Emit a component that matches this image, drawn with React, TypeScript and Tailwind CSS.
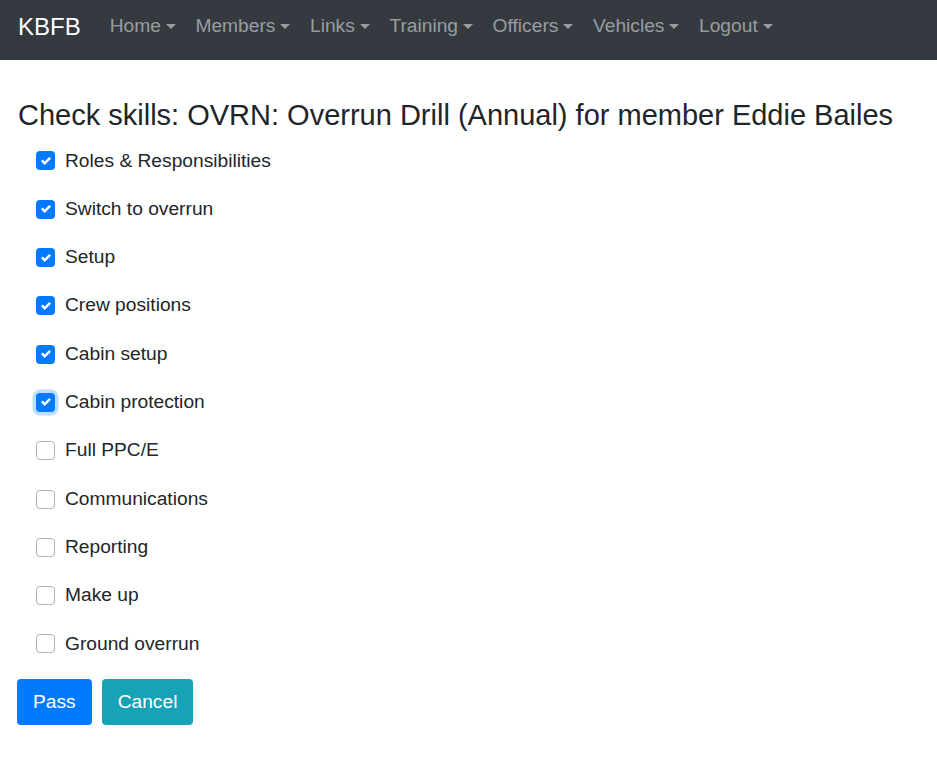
const NAV = ["Home", "Members", "Links", "Training", "Officers", "Vehicles", "Logout"]

const SKILLS = [
  { label: "Roles & Responsibilities", checked: true },
  { label: "Switch to overrun", checked: true },
  { label: "Setup", checked: true },
  { label: "Crew positions", checked: true },
  { label: "Cabin setup", checked: true },
  { label: "Cabin protection", checked: true, focus: true },
  { label: "Full PPC/E", checked: false },
  { label: "Communications", checked: false },
  { label: "Reporting", checked: false },
  { label: "Make up", checked: false },
  { label: "Ground overrun", checked: false },
]

function Caret() {
  return (
    <span className="ml-[5px] inline-block h-0 w-0 border-x-[5px] border-t-[5px] border-x-transparent border-t-current align-middle" />
  )
}

function Box({ checked, focus }: { checked: boolean; focus?: boolean }) {
  if (!checked) {
    return (
      <span className="block h-[19px] w-[19px] rounded-[4px] border border-[#adb5bd] bg-white" />
    )
  }
  return (
    <span
      className={
        "flex h-[19px] w-[19px] items-center justify-center rounded-[4px] bg-[#007bff]" +
        (focus ? " shadow-[0_0_0_3.5px_rgba(0,123,255,0.25)]" : "")
      }
    >
      <svg viewBox="0 0 8 8" className="h-[10px] w-[10px]">
        <path
          fill="#fff"
          d="M6.564.75l-3.59 3.612-1.538-1.55L0 4.26l2.974 2.99L8 2.193z"
        />
      </svg>
    </span>
  )
}

export default function App() {
  return (
    <div className="min-h-[768px] bg-white font-['Liberation_Sans',Arial,sans-serif] text-[#212529]">
      <nav className="flex h-[60px] items-center bg-[#343a40] px-[18px] pb-[7px]">
        <span className="mr-[19.2px] text-[24px] leading-[1.5] text-white">KBFB</span>
        {NAV.map((n) => (
          <span
            key={n}
            className="flex items-center px-[9.8px] text-[19.2px] leading-[1.5] text-[rgba(255,255,255,0.5)]"
          >
            {n}
            <Caret />
          </span>
        ))}
      </nav>

      <div className="px-[18px]">
        <h4 className="mt-[38px] text-[29px] font-medium leading-[1.2]">
          Check skills: OVRN: Overrun Drill (Annual) for member Eddie Bailes
        </h4>
        <div className="mt-[4px] flex flex-col">
          {SKILLS.map((s) => (
            <label key={s.label} className="flex h-[48.3px] items-center pl-[18px]">
              <Box checked={s.checked} focus={s.focus} />
              <span className="ml-[10px] text-[19.2px] leading-[1.5]">{s.label}</span>
            </label>
          ))}
        </div>
        <div className="mt-[11px] flex gap-[10px]">
          <button className="-ml-px h-[46px] rounded-[4px] bg-[#007bff] px-[16px] text-[19.2px] text-white">
            Pass
          </button>
          <button className="h-[46px] rounded-[4px] bg-[#17a2b8] px-[16px] text-[19.2px] text-white">
            Cancel
          </button>
        </div>
      </div>
    </div>
  )
}
